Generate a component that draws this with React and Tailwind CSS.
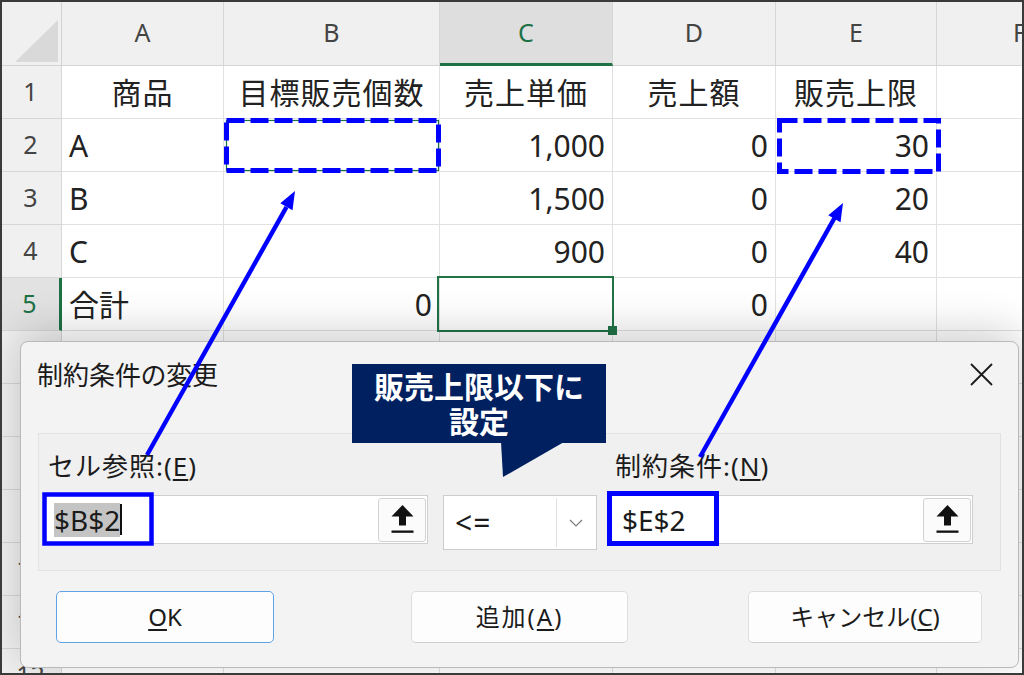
import React from "react";

const COLS = ["A", "B", "C", "D", "E", "F"];

const DATA = [
  ["商品", "目標販売個数", "売上単価", "売上額", "販売上限", ""],
  ["A", "", "1,000", "0", "30", ""],
  ["B", "", "1,500", "0", "20", ""],
  ["C", "", "900", "0", "40", ""],
  ["合計", "0", "", "0", "", ""],
  ["", "", "", "", "", ""],
  ["", "", "", "", "", ""],
  ["", "", "", "", "", ""],
  ["", "", "", "", "", ""],
  ["", "", "", "", "", ""],
  ["", "", "", "", "", ""],
  ["", "", "", "", "", ""],
];

function UpButton() {
  return (
    <div className="w-[48px] h-[44px] border border-[#d2d2d2] rounded-[3px] bg-[#fbfbfb] flex items-center justify-center">
      <svg width="23" height="29" viewBox="0 0 23 29">
        <polygon points="11.5,0 22.5,11.5 15,11.5 15,20.5 8,20.5 8,11.5 0.5,11.5" fill="#111" />
        <rect x="0.5" y="25.5" width="22" height="2.3" fill="#111" />
      </svg>
    </div>
  );
}

function Sheet() {
  return (
    <div className="grid grid-cols-[62px_162px_216px_173px_163px_161px_166px] grid-rows-[66px_repeat(12,53px)] w-[1103px] bg-white">
      <div className="bg-[#f0f0f0] border-r border-b border-[#d2d2d2] relative">
        <svg className="absolute inset-0" width="62" height="66" viewBox="0 0 62 66">
          <polygon points="15,62 58,62 58,20" fill="#d9d9d9" />
        </svg>
      </div>
      {COLS.map((c) => (
        <div
          key={c}
          className={
            c === "C"
              ? "bg-[#dedede] border-r border-[#d6d6d6] border-b-[3px] border-b-[#1e7145] flex items-center justify-center text-[25px] text-[#1e7145] pt-[2px]"
              : "bg-[#f0f0f0] border-r border-b border-[#d6d6d6] flex items-center justify-center text-[25px] text-[#444444]"
          }
        >
          {c}
        </div>
      ))}
      {DATA.map((row, ri) => {
        const rn = ri + 1;
        return (
          <React.Fragment key={ri}>
            <div
              className={
                rn === 5
                  ? "bg-[#e2e2e2] border-r-[3px] border-r-[#1e7145] border-b border-[#d6d6d6] flex items-center justify-center text-[25px] text-[#1e7145]"
                  : "bg-[#f0f0f0] border-r border-b border-[#d6d6d6] flex items-center justify-center text-[25px] text-[#444444]"
              }
            >
              {rn}
            </div>
            {row.map((v, ci) => {
              const center = ri === 0;
              const left = ci === 0;
              const selected = rn === 5 && ci === 2;
              return (
                <div
                  key={ci}
                  className={
                    "relative border-r border-b border-[#e1e1e1] flex items-center text-[30px] text-[#222222] px-[7px] " +
                    (center ? "justify-center tracking-[1px]" : left ? "justify-start" : "justify-end")
                  }
                >
                  {v}
                  {selected && (
                    <div className="absolute -left-[3px] -top-[2px] -right-[2px] -bottom-[2px] border-[2.5px] border-[#217346] z-10">
                      <div className="absolute -right-[5px] -bottom-[5px] w-[9px] h-[9px] bg-[#217346]" />
                    </div>
                  )}
                </div>
              );
            })}
          </React.Fragment>
        );
      })}
    </div>
  );
}

function Dialog() {
  return (
    <div className="absolute left-[20px] top-[341px] w-[999px] h-[327px] rounded-[8px] border border-[#b9b9b9] bg-[#f3f3f3] shadow-[0_-8px_44px_rgba(0,0,0,0.2)] flex flex-col text-[#1b1b1b] z-20">
      <div className="h-[61px] flex items-center justify-between pl-[16px] pr-[25px] pt-[4px]">
        <span className="text-[26px] leading-none [font-feature-settings:'palt']">制約条件の変更</span>
        <svg width="23" height="23" viewBox="0 0 23 23">
          <path d="M1 1 L22 22 M22 1 L1 22" stroke="#1b1b1b" strokeWidth="1.8" fill="none" />
        </svg>
      </div>
      <div className="mt-[30px] mx-[17px] h-[138px] border border-[#e2e2e2] bg-[#f0f0f0] flex pl-[6px] pt-[17px]">
        <div className="flex flex-col w-[383px]">
          <div className="h-[30px] leading-[30px] text-[26px] pl-[3px] tracking-[1px]">
            セル参照:(<span className="underline underline-offset-[3px] decoration-[1.5px]">E</span>)
          </div>
          <div className="mt-[14px] h-[49px] bg-white border border-[#cfcfcf] flex items-center pl-[8px] pr-[1px]">
            <span className="text-[28px] bg-[#c4c4c4] leading-[34px]">$B$2</span>
            <span className="w-[1.5px] h-[31px] bg-[#111]" />
            <div className="flex-1" />
            <UpButton />
          </div>
        </div>
        <div className="ml-[15px] w-[154px] mt-[44px] h-[55px] bg-white border border-[#cdcdcd] flex">
          <div className="flex-1 flex items-center pl-[11px] text-[30px] tracking-[1px] pb-[1px]">&lt;=</div>
          <div className="w-[39px] my-[2px] mr-[1px] border-l border-[#e1e1e1] flex items-center justify-center">
            <svg width="14" height="8" viewBox="0 0 14 8">
              <path d="M1 1 L7 7 L13 1" stroke="#7a7a7a" strokeWidth="1.2" fill="none" />
            </svg>
          </div>
        </div>
        <div className="ml-[14px] w-[362px] flex flex-col">
          <div className="h-[30px] leading-[30px] text-[26px] pl-[4px] tracking-[1px]">
            制約条件:(<span className="underline underline-offset-[3px] decoration-[1.5px]">N</span>)
          </div>
          <div className="mt-[14px] h-[49px] bg-white border border-[#cfcfcf] flex items-center pl-[10px] pr-[1px]">
            <span className="text-[28px] leading-[34px]">$E$2</span>
            <div className="flex-1" />
            <UpButton />
          </div>
        </div>
      </div>
      <div className="mt-[20px] flex text-[24px]">
        <div className="ml-[35px] w-[218px] h-[52px] rounded-[5px] border-[1.5px] border-[#5fa3e6] bg-[#fdfdfd] flex items-center justify-center">
          <span className="underline underline-offset-[3px] decoration-[1.5px]">O</span>K
        </div>
        <div className="ml-[137px] w-[217px] h-[52px] rounded-[5px] border border-[#dedede] border-b-[#cfcfcf] bg-[#fdfdfd] flex items-center justify-center tracking-[2px]">
          追加(<span className="underline underline-offset-[3px] decoration-[1.5px]">A</span>)
        </div>
        <div className="ml-[120px] w-[234px] h-[52px] rounded-[5px] border border-[#dedede] border-b-[#cfcfcf] bg-[#fdfdfd] flex items-center justify-center">
          キャンセル(<span className="underline underline-offset-[3px] decoration-[1.5px]">C</span>)
        </div>
      </div>
    </div>
  );
}

function Callout() {
  return (
    <>
      <div className="absolute left-[352px] top-[364px] w-[254px] h-[79px] bg-[#002060] z-30 flex flex-col items-center pt-[5px] text-white font-bold text-[30px] leading-[35px]">
        <span>販売上限以下に</span>
        <span>設定</span>
      </div>
      <svg className="absolute left-[500px] top-[442px] z-30" width="66" height="37" viewBox="0 0 66 37">
        <polygon points="1,0 64,0 3,35" fill="#002060" />
      </svg>
    </>
  );
}

function Annotations() {
  return (
    <svg className="absolute left-0 top-0 z-40 pointer-events-none" width="1024" height="675" viewBox="0 0 1024 675">
      <rect x="226.5" y="120.5" width="212" height="50" fill="none" stroke="#217346" strokeWidth="1.2" />
      <rect x="226.5" y="120.5" width="212" height="50" fill="none" stroke="#0000ff" strokeWidth="5" strokeDasharray="18 6" />
      <rect x="779.5" y="120.5" width="159" height="51" fill="none" stroke="#0000ff" strokeWidth="5" strokeDasharray="18 6" />
      <rect x="44.5" y="494.5" width="107" height="49" fill="none" stroke="#0000ff" strokeWidth="4.5" />
      <rect x="609.5" y="493.5" width="107" height="50" fill="none" stroke="#0000ff" strokeWidth="5" />
      <line x1="147" y1="455" x2="286.5" y2="207" stroke="#0000ff" strokeWidth="4.5" />
      <polygon points="295,191 292.5,210.3 280.3,203.3" fill="#0000ff" />
      <line x1="700" y1="457" x2="834.5" y2="218" stroke="#0000ff" strokeWidth="4.5" />
      <polygon points="843,203 840.5,222.2 828.3,215.3" fill="#0000ff" />
    </svg>
  );
}

export default function App() {
  return (
    <div className="relative w-[1024px] h-[675px] overflow-hidden bg-white font-['Noto_Sans','Noto_Sans_CJK_JP',sans-serif]">
      <Sheet />
      <Dialog />
      <Callout />
      <Annotations />
      <div className="absolute inset-0 border-2 border-[#3a3a3a] pointer-events-none z-50" />
    </div>
  );
}
